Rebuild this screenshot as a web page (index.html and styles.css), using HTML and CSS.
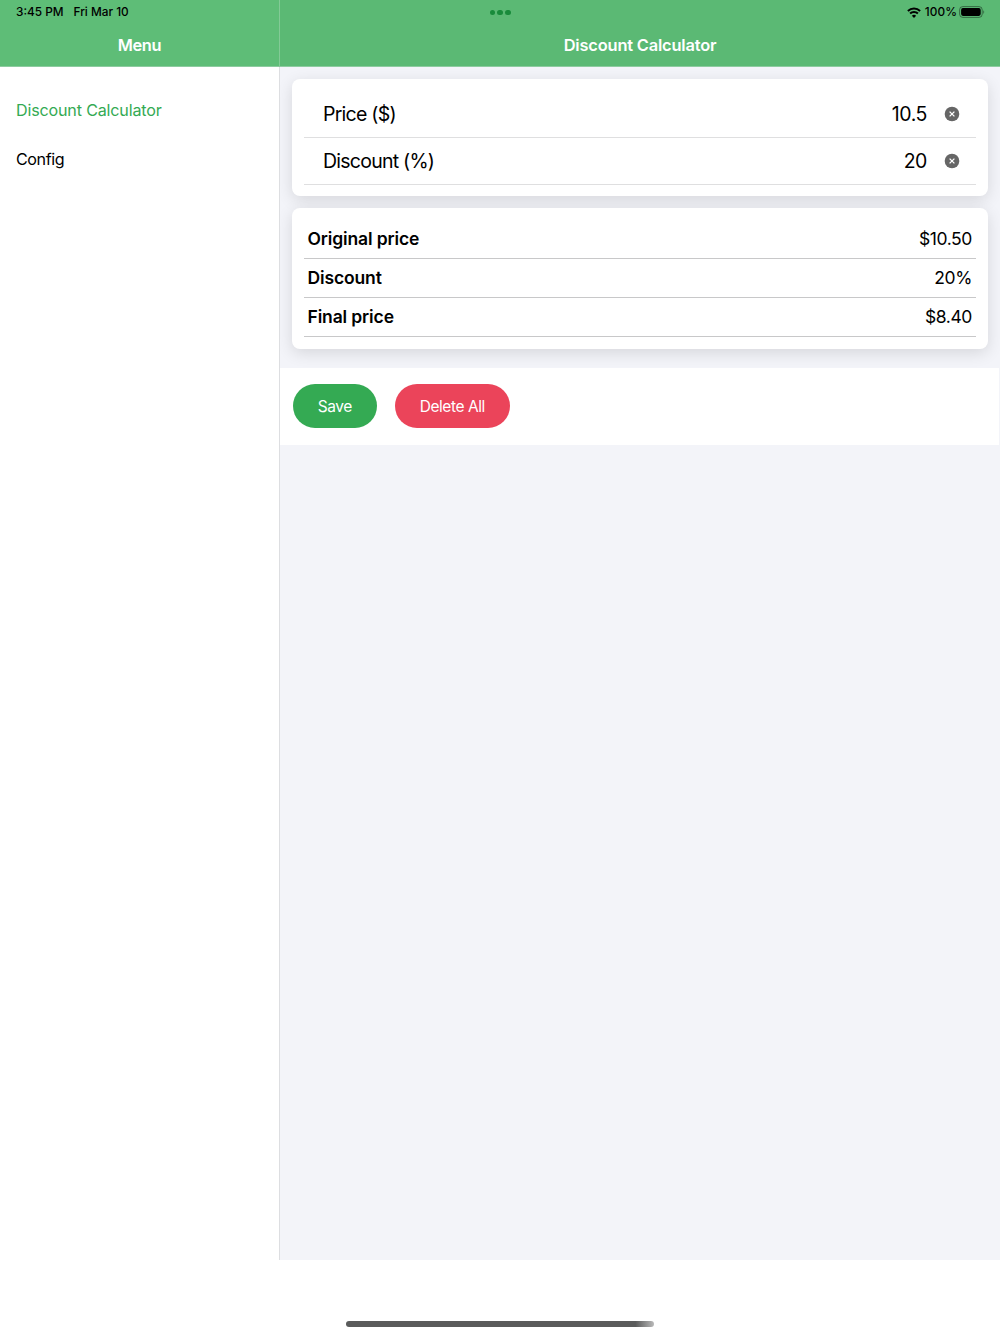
FILE: index.html
```html
<!DOCTYPE html>
<html lang="en">
<head>
<meta charset="utf-8">
<title>Discount Calculator</title>
<link rel="stylesheet" href="styles.css">
</head>
<body>
<div class="app">
  <div class="panes">
    <aside class="sidebar">
      <header class="bar bar-menu">
        <div class="status"><span class="clock">3:45 PM</span><span class="date">Fri Mar 10</span></div>
        <h2 class="title">Menu</h2>
      </header>
      <nav class="menu">
        <a class="menu-item active">Discount Calculator</a>
        <a class="menu-item config">Config</a>
      </nav>
    </aside>
    <main class="content">
      <header class="bar bar-main">
        <div class="status status-right">
          <svg class="wifi" width="14" height="11" viewBox="0 0 14 11"><g fill="none" stroke="#000" stroke-width="2"><path d="M.9 4a8.8 8.8 0 0 1 12.2 0"/><path d="M3.1 6.5a5.5 5.5 0 0 1 7.8 0"/></g><path d="M7 10.9 4.9 8.7a3 3 0 0 1 4.2 0z"/></svg>
          <span class="percent">100%</span>
          <svg class="battery" width="26" height="12" viewBox="0 0 26 12"><rect x=".6" y=".6" width="22.6" height="10.8" rx="3.2" fill="none" stroke="#000" stroke-opacity=".42"/><rect x="2.1" y="2.1" width="19.6" height="7.8" rx="1.8"/><path d="M24.3 4.2c1.2.4 1.2 3.2 0 3.6z" fill-opacity=".45"/></svg>
        </div>
        <h1 class="title">Discount Calculator</h1>
      </header>
      <section class="card">
        <div class="field"><span class="label price">Price ($)</span><span class="value v1">10.5</span>
          <svg class="clear" width="16" height="16" viewBox="0 0 16 16"><circle cx="8" cy="8" r="7.3" fill="#666"/><path d="m5.6 5.6 4.8 4.8m0-4.8-4.8 4.8" stroke="#fff" stroke-width="1.3"/></svg></div>
        <div class="field"><span class="label disc">Discount (%)</span><span class="value v2">20</span>
          <svg class="clear" width="16" height="16" viewBox="0 0 16 16"><circle cx="8" cy="8" r="7.3" fill="#666"/><path d="m5.6 5.6 4.8 4.8m0-4.8-4.8 4.8" stroke="#fff" stroke-width="1.3"/></svg></div>
      </section>
      <section class="card results">
        <div class="row"><strong>Original price</strong><span>$10.50</span></div>
        <div class="row"><strong>Discount</strong><span>20%</span></div>
        <div class="row"><strong>Final price</strong><span>$8.40</span></div>
      </section>
      <div class="actions">
        <button class="btn save">Save</button>
        <button class="btn delete">Delete All</button>
      </div>
    </main>
  </div>
  <footer class="home"><div class="home-bar"></div></footer>
  <div class="dots"><i></i><i></i><i></i></div>
</div>
</body>
</html>
```
FILE: styles.css
```css
* { box-sizing: border-box; }
body { margin: 0; background: #fff; color: #000; font-family: Inter, "Liberation Sans", sans-serif; }
.app { position: relative; width: 1000px; height: 1334px; overflow: hidden; display: flex; flex-direction: column; }
.panes { display: grid; grid-template-columns: 280px 720px; height: 1260px; }
.sidebar { border-right: 1px solid #dddee1; background: #fff; }
.content { background: #f3f4f9; overflow: hidden; }
.bar { height: 67px; background: #5bb974; border-bottom: 1px solid #8dcba0; }
.bar-menu { background: #5ebd77; width: 280px; border-right: 1px solid #83ca96; }
.status { height: 24px; padding-left: 16px; display: flex; align-items: center; font-size: 11.8px; font-weight: 500; letter-spacing: 0; }
.date { margin-left: 10px; }
.status-right { padding: 0 15px 0 0; justify-content: flex-end; letter-spacing: .1px; }
.percent { margin: 0 2px 0 4px; }
.title { margin: 0; height: 42px; line-height: 42px; text-align: center; color: #fff; font-size: 16.4px; font-weight: 600; letter-spacing: -.17px; }
.bar-menu .title { letter-spacing: -.4px; }
.menu { padding-top: 19px; }
.menu-item { display: block; height: 49px; line-height: 48px; padding-left: 16px; font-size: 16.1px; letter-spacing: -.17px; }
.config { letter-spacing: -.4px; }
.active { color: #34aa53; }
.card { margin: 11.6px 12px 0 11.5px; padding: 12px 12px 11px; height: 117.9px; background: #fff; border-radius: 8px; box-shadow: 0 4px 16px rgba(0, 0, 0, .12); }
.field { height: 47.2px; padding: 1px 16px 0 19.5px; border-bottom: 1px solid #dfdfe0; display: flex; align-items: center; font-size: 19.5px; letter-spacing: -.42px; }
.price { letter-spacing: -.75px; }
.disc { letter-spacing: -.75px; }
.field + .field { padding-top: 0; }
.value { margin-left: auto; }
.clear { margin-left: 17px; }
.results { height: 141px; padding-top: 12px; }
.row { height: 39px; padding: 0 4px; border-bottom: 1px solid #c8c8c9; display: flex; align-items: center; justify-content: space-between; line-height: 22px; font-size: 17.5px; letter-spacing: -.4px; }
.row strong { font-weight: 600; letter-spacing: -.13px; }
.actions { position: relative; margin-top: 19px; margin-right: 1px; height: 76.5px; padding: 16px 0 0 12.5px; background: #fff; display: flex; gap: 17.5px; }
.btn { height: 44px; padding: 1px 0 0; border: 0; border-radius: 22px; color: #fff; font: 400 15.5px Inter, "Liberation Sans", sans-serif; letter-spacing: -.45px; }
.save { width: 84.5px; background: #34aa53; }
.delete { width: 115.5px; background: #eb445a; }
.home { height: 74px; display: flex; justify-content: center; padding-top: 61px; }
.home-bar { width: 308px; height: 5.5px; border-radius: 3px; background: linear-gradient(90deg, #5a5b5b 94%, #b9b9b9); }
.dots { position: absolute; left: 489.5px; top: 10px; display: flex; gap: 2.8px; }
.dots i { width: 5.2px; height: 5.2px; border-radius: 50%; background: #198b3b; }
```
